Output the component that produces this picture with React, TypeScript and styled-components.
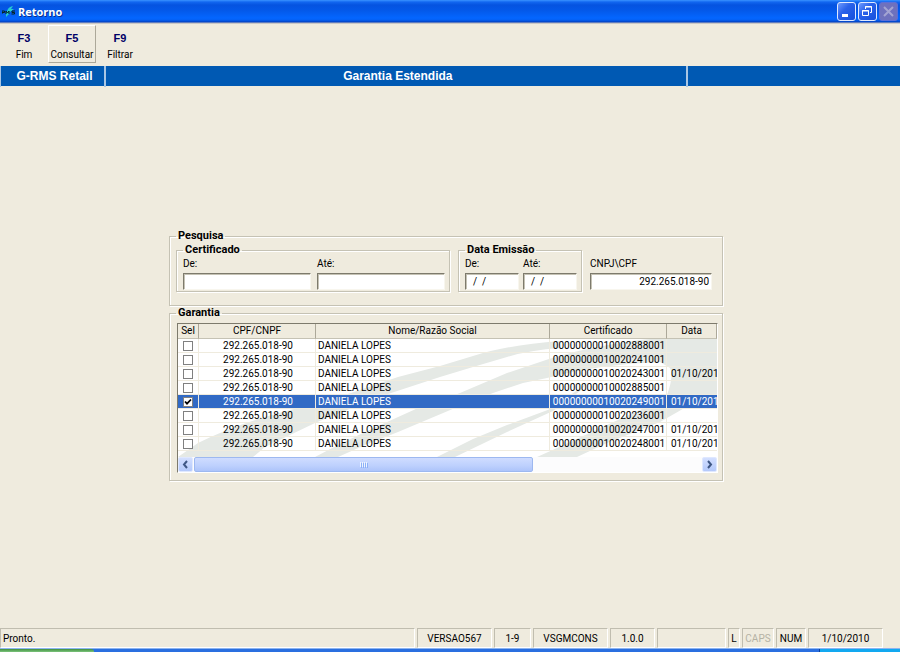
import React from "react";
import styled, { createGlobalStyle, css } from "styled-components";

const face = "#efebde";
const shadow = "#aca899";

const GlobalStyle = createGlobalStyle`
  *, *::before, *::after { box-sizing: border-box; }
  body { margin: 0; background: ${face}; }
  button, input { font: inherit; color: inherit; }
`;

const Window = styled.div`
  display: flex;
  flex-direction: column;
  min-height: 100vh;
  background: ${face};
  color: #000;
  font: 10px/14px Roboto, sans-serif;
`;

const TitleBar = styled.header`
  display: flex;
  align-items: center;
  height: 24px;
  padding: 0 2px;
  gap: 2px;
  background: linear-gradient(#3a93ff 0, #1267f0 2px, #0553e0 5px, #0458e8 10px, #0466ff 18px, #0460f4 20px, #0340c0 22px, #b9b8c0 23px, #dcd8cc 24px);
`;

const AppTitle = styled.h1`
  flex: 1;
  margin: 0;
  color: #fff;
  font: bold 11px/22px "Open Sans", sans-serif;
  text-shadow: 1px 1px 0 #0a2f8c;
`;

const CaptionButton = styled.button<{ $off?: boolean }>`
  display: grid;
  place-items: center;
  width: 19px;
  height: 19px;
  padding: 0;
  margin-bottom: 2px;
  border: 1px solid ${(p) => (p.$off ? "#5b6fd8" : "#dfe9ff")};
  border-radius: 3px;
  background: ${(p) =>
    p.$off ? "#6e71bd" : "linear-gradient(135deg, #6f9bff, #2a62ea 40%, #1550dc)"};
  color: ${(p) => (p.$off ? "#a3a4d2" : "#fff")};
`;

const Toolbar = styled.nav`
  display: flex;
  height: 42px;
  padding-top: 1px;
`;

const ToolButton = styled.button<{ $raised?: boolean }>`
  display: flex;
  flex-direction: column;
  align-items: center;
  gap: 3px;
  width: 48px;
  height: 38px;
  padding: 5px 0 0;
  background: none;
  border: 1px solid transparent;
  ${(p) =>
    p.$raised &&
    css`
      border-color: #fff ${shadow} ${shadow} #fff;
    `}
`;

const KeyName = styled.strong`
  color: #000066;
  font: bold 11px/14px "Liberation Sans", sans-serif;
`;

const KeyLabel = styled.span`
  font: 10px/14px Roboto, sans-serif;
`;

const Banner = styled.div`
  display: grid;
  grid-template-columns: 106px 581fr 212fr;
  height: 20px;
  background: #0059b3;
  color: #fff;
  font: bold 12px/21px "Liberation Sans", sans-serif;
  text-align: center;
`;

const BannerCell = styled.div`
  padding-left: 4px;
  border-right: 2px solid #a9c6e4;
  &:first-child { border-left: 1px solid #a9c6e4; }
  &:last-child { border-right: 0; }
`;

const Main = styled.main`
  flex: 1;
  display: flex;
  flex-direction: column;
  align-items: center;
  justify-content: center;
  padding: 0 8px 4px 0;
`;

const Content = styled.div`
  width: 100%;
  max-width: 554px;
`;

const Group = styled.fieldset`
  min-width: 0;
  margin: 0;
  padding: 0 4px 0 6px;
  border: 1px solid #c5c2b4;
  box-shadow: 1px 1px 0 #fff, inset 1px 1px 0 #fff;
`;

const Legend = styled.legend`
  padding: 0 2px;
  font: bold 11px/14px Roboto, sans-serif;
`;

const SearchRow = styled.div`
  display: flex;
  align-items: flex-start;
  gap: 8px;
  height: 62px;
`;

const FieldRow = styled.div<{ $gap: number }>`
  display: flex;
  gap: ${(p) => p.$gap}px;
  padding-bottom: 1px;
`;

const Field = styled.label<{ $width: number; $top?: boolean }>`
  display: flex;
  flex-direction: column;
  gap: 2px;
  width: ${(p) => p.$width}px;
  ${(p) => p.$top && "padding-top: 14px;"}
`;

const TextBox = styled.input<{ $right?: boolean }>`
  width: 100%;
  height: 17px;
  padding: 0 2px;
  border: 1px solid;
  border-color: #7d7a6c #f8f6ee #f8f6ee #7d7a6c;
  box-shadow: inset 1px 1px 0 #c5c2b4;
  border-radius: 0;
  background: #fff;
  outline: 0;
  text-align: ${(p) => (p.$right ? "right" : "left")};
`;

const Grid = styled.div`
  position: relative;
  height: 150px;
  margin: 3px 0 7px 1px;
  display: flex;
  flex-direction: column;
  justify-content: space-between;
  overflow: hidden;
  border: 1px solid;
  border-color: #7d7a6c #fff #fff #7d7a6c;
  background: #fff;
`;

const Watermark = styled.svg`
  position: absolute;
  top: 14px;
  left: 0;
  width: 540px;
  height: 120px;
`;

const Table = styled.table`
  position: relative;
  width: 100%;
  table-layout: fixed;
  border-collapse: separate;
  border-spacing: 0;
`;

const HeadCell = styled.th<{ $width?: number }>`
  width: ${(p) => (p.$width ? `${p.$width}px` : "auto")};
  height: 15px;
  padding: 0;
  background: ${face};
  border-right: 1px solid ${shadow};
  border-bottom: 1px solid #c5c2b4;
  font-weight: normal;
  line-height: 14px;
`;

const Row = styled.tr<{ $selected: boolean }>`
  ${(p) =>
    p.$selected &&
    css`
      background: #316ac5;
      color: #fff;
    `}
`;

const Cell = styled.td<{ $align?: string; $pad?: number }>`
  height: 14px;
  padding: 0 0 0 ${(p) => p.$pad ?? 0}px;
  border-right: 1px solid #efebde;
  border-bottom: 1px solid #efebde;
  line-height: 13px;
  text-align: ${(p) => p.$align || "left"};
  white-space: nowrap;
  &:last-child { border-right: 0; }
`;

const Tick = styled.input`
  appearance: none;
  display: block;
  width: 10px;
  height: 10px;
  margin: 0 auto;
  border: 1px solid #808080;
  background: #fff;
  &:checked {
    background: #fff
      url("data:image/svg+xml,%3Csvg xmlns='http://www.w3.org/2000/svg' viewBox='0 0 8 8'%3E%3Cpath d='M1 3.5 3 5.7 7 1.5' fill='none' stroke='black' stroke-width='1.8'/%3E%3C/svg%3E");
  }
`;

const ScrollBar = styled.div`
  position: relative;
  display: flex;
  height: 15px;
  background: #fcfcfd;
`;

const Thumb = styled.div`
  display: grid;
  place-items: center;
  width: 339px;
  margin-left: 1px;
  border: 1px solid #9db8f0;
  border-radius: 2px;
  background: linear-gradient(#cfdcff, #bdd0fd 60%, #adc4fa);
`;

const ScrollButton = styled.button`
  display: grid;
  place-items: center;
  width: 15px;
  padding: 0;
  border: 1px solid #dfe8ff;
  border-radius: 2px;
  background: linear-gradient(#d3dfff, #b4c9fb);
  color: #3f5785;
  &:last-child { margin-left: auto; }
`;

const StatusBar = styled.footer`
  display: flex;
  gap: 2px;
  height: 20px;
  padding-right: 17px;
`;

const Pane = styled.div<{ $width?: number; $dim?: boolean }>`
  flex: ${(p) => (p.$width ? `0 0 ${p.$width}px` : "1")};
  padding: ${(p) => (p.$width ? "0" : "0 2px")};
  text-align: ${(p) => (p.$width ? "center" : "left")};
  border: 1px solid;
  border-color: #c0bdaf #fff #fff #c0bdaf;
  color: ${(p) => (p.$dim ? "#b5b2a4" : "#000")};
  font: 10px/19px Roboto, sans-serif;
  white-space: nowrap;
`;

const TaskBar = styled.div`
  display: flex;
  height: 4px;
  background: #2a6fe0;
  border-top: 1px solid #8db4f0;
`;

const StartEdge = styled.div`
  width: 94px;
  border-radius: 0 3px 0 0;
  background: linear-gradient(#3f8f3f, #7cc47c);
`;

const TrayEdge = styled.div`
  width: 81px;
  margin-left: auto;
  border-left: 1px solid #0a3f9c;
  background: #12a8f0;
`;

const rows = [
  ["00000000010002888001", ""],
  ["00000000010020241001", ""],
  ["00000000010020243001", "01/10/201"],
  ["00000000010002885001", ""],
  ["00000000010020249001", "01/10/201"],
  ["00000000010020236001", ""],
  ["00000000010020247001", "01/10/201"],
  ["00000000010020248001", "01/10/201"],
];

export default function App() {
  return (
    <Window>
      <GlobalStyle />
      <TitleBar>
        <svg width="14" height="18" viewBox="0 0 14 18" aria-hidden="true">
          <path d="M4 14C4 8 6 4 11 3L9 6h3L8 9l-1 2z" fill="#27cdd0" />
          <path d="M0 11V8h2.500v1.500H0M4 11V8l1.500 2L7 8v3M13 8h-3v1.500h2.500V11H9.500" fill="none" stroke="#06251f" />
        </svg>
        <AppTitle>Retorno</AppTitle>
        <CaptionButton aria-label="Minimizar">
          <svg width="17" height="17"><path d="M4 11h6v3H4z" fill="currentColor" /></svg>
        </CaptionButton>
        <CaptionButton aria-label="Restaurar">
          <svg width="17" height="17" fill="none" stroke="currentColor">
            <path d="M6.5 6V3.5h6v6H11M6 4h7M3.5 7.5h6v5h-6zM3 8h7" />
          </svg>
        </CaptionButton>
        <CaptionButton aria-label="Fechar" $off disabled>
          <svg width="17" height="17"><path d="M4 4l9 9M13 4l-9 9" stroke="currentColor" strokeWidth="2" /></svg>
        </CaptionButton>
      </TitleBar>
      <Toolbar>
        <ToolButton><KeyName>F3</KeyName><KeyLabel>Fim</KeyLabel></ToolButton>
        <ToolButton $raised><KeyName>F5</KeyName><KeyLabel>Consultar</KeyLabel></ToolButton>
        <ToolButton><KeyName>F9</KeyName><KeyLabel>Filtrar</KeyLabel></ToolButton>
      </Toolbar>
      <Banner>
        <BannerCell>G-RMS Retail</BannerCell>
        <BannerCell>Garantia Estendida</BannerCell>
        <BannerCell />
      </Banner>
      <Main>
        <Content>
          <Group>
            <Legend>Pesquisa</Legend>
            <SearchRow>
              <Group>
                <Legend>Certificado</Legend>
                <FieldRow $gap={6}>
                  <Field $width={128}>De:<TextBox /></Field>
                  <Field $width={128}>Até:<TextBox /></Field>
                </FieldRow>
              </Group>
              <Group>
                <Legend>Data Emissão</Legend>
                <FieldRow $gap={4}>
                  <Field $width={54}>De:<TextBox defaultValue="  /  /" /></Field>
                  <Field $width={54}>Até:<TextBox defaultValue="  /  /" /></Field>
                </FieldRow>
              </Group>
              <Field $width={122} $top>CNPJ\CPF<TextBox $right defaultValue="292.265.018-90" /></Field>
            </SearchRow>
          </Group>
          <Group>
            <Legend>Garantia</Legend>
            <Grid>
              <Watermark viewBox="178 338 540 120" fill="#e5e9e5" aria-hidden="true">
                <path d="M178 457L198 443Q240 422 298 408L345 395L398 377L440 366L473 356Q507 345 560 341V348Q530 350 507 357L473 367L440 377L385 395L352 408L315 423L265 447L253 457Z" />
                <path d="M315 457L338 445L365 432L418 408L460 393L507 373L540 362Q580 348 640 340L660 338H718V397L688 406L660 422L607 443L577 457H537L557 448L607 425L640 410L667 395Q674 376 670 368L660 362Q600 364 547 378L523 383L493 393L455 408L398 432L365 445L338 457Z" />
                <path d="M437 457L473 439L507 425L553 408L588 382L580 391L553 411L507 432L455 457Z" />
              </Watermark>
              <Table>
                <thead>
                  <tr>
                    <HeadCell $width={21}>Sel</HeadCell>
                    <HeadCell $width={117}>CPF/CNPF</HeadCell>
                    <HeadCell>Nome/Razão Social</HeadCell>
                    <HeadCell $width={117}>Certificado</HeadCell>
                    <HeadCell $width={50}>Data</HeadCell>
                  </tr>
                </thead>
                <tbody>
                  {rows.map(([cert, date], i) => (
                    <Row key={cert} $selected={i === 4}>
                      <Cell><Tick type="checkbox" defaultChecked={i === 4} aria-label={cert} /></Cell>
                      <Cell $align="center" $pad={2}>292.265.018-90</Cell>
                      <Cell $pad={2}>DANIELA LOPES</Cell>
                      <Cell $align="center" $pad={2}>{cert}</Cell>
                      <Cell $pad={4}>{date}</Cell>
                    </Row>
                  ))}
                </tbody>
              </Table>
              <ScrollBar>
                <ScrollButton aria-label="Rolar para a esquerda">
                  <svg width="9" height="9"><path d="M6 1L3 4.500l3 3.500" fill="none" stroke="currentColor" strokeWidth="2" /></svg>
                </ScrollButton>
                <Thumb>
                  <svg width="8" height="6" aria-hidden="true">
                    <path d="M.5 0v5M2.500 0v5M4.500 0v5M6.500 0v5" stroke="#eef4fe" />
                    <path d="M1.500 1v5M3.500 1v5M5.500 1v5M7.500 1v5" stroke="#8cb0f8" />
                  </svg>
                </Thumb>
                <ScrollButton aria-label="Rolar para a direita">
                  <svg width="9" height="9"><path d="M3 1l3 3.500L3 8" fill="none" stroke="currentColor" strokeWidth="2" /></svg>
                </ScrollButton>
              </ScrollBar>
            </Grid>
          </Group>
        </Content>
      </Main>
      <StatusBar>
        <Pane>Pronto.</Pane>
        <Pane $width={75}>VERSAO567</Pane>
        <Pane $width={37}>1-9</Pane>
        <Pane $width={75}>VSGMCONS</Pane>
        <Pane $width={45}>1.0.0</Pane>
        <Pane $width={69} />
        <Pane $width={12}>L</Pane>
        <Pane $width={32} $dim>CAPS</Pane>
        <Pane $width={30}>NUM</Pane>
        <Pane $width={75}>1/10/2010</Pane>
      </StatusBar>
      <TaskBar><StartEdge /><TrayEdge /></TaskBar>
    </Window>
  );
}
